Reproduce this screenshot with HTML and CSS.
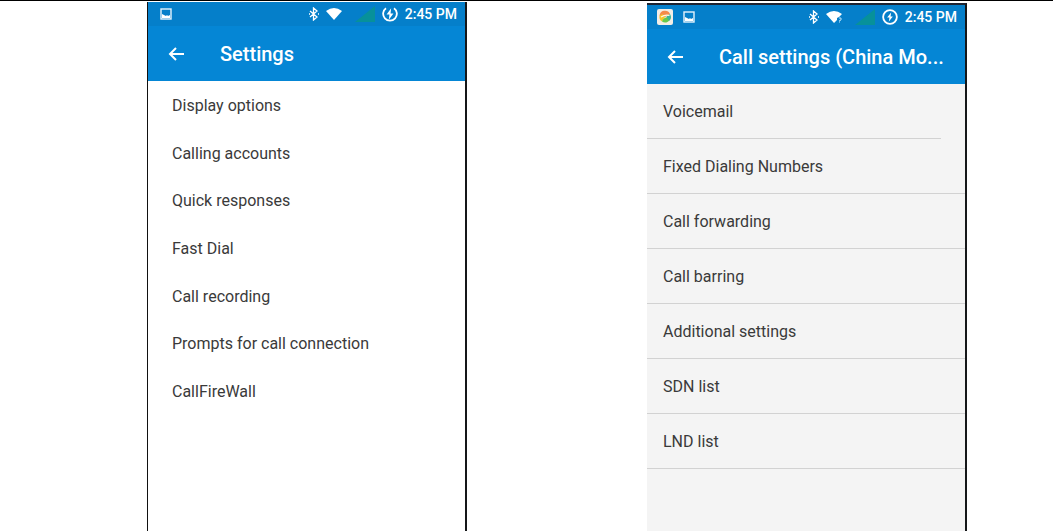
FILE: index.html
```html
<!DOCTYPE html>
<html lang="en">
<head>
  <meta charset="UTF-8">
  <title>Call settings</title>
  <link rel="stylesheet" href="styles.css">
</head>
<body>

  <main class="screens">

    <section class="phone phone-settings">
      <header class="header">
        <div class="status-bar">
          <svg class="icon-image" viewBox="0 0 12 12"><rect x="1" y="1" width="10" height="10" fill="none" stroke="#e4f3fc" stroke-width="1.4"/><path d="M2 6l2 1 2 1 1-1 1 1 2-1v3H2z" fill="#fff"/></svg>
          <span class="status-space"></span>
          <svg class="icon-bluetooth" viewBox="0 0 10 14"><path d="M1 4l7 6-3.500 3V1L8 4l-7 6M0 7h1M9 7h1" fill="none" stroke="#fff" stroke-width="1.300"/></svg>
          <svg class="icon-wifi" viewBox="0 0 16 12"><path d="M0 3Q8-3 16 3L8 12z" fill="#fff"/></svg>
          <svg class="icon-signal" viewBox="0 0 20 16"><path d="M20 0v16H0z" fill="#07919a"/></svg>
          <svg class="icon-battery" viewBox="0 0 14 14"><path d="M3.500 1.900A6 6 0 1 0 10.500 1.900" fill="none" stroke="#fff" stroke-width="1.600"/><path d="M8 2L4 7.500h2.500L6 12l4-5.500H7.500z" fill="#fff"/></svg>
          <time>2:45 PM</time>
        </div>
        <div class="toolbar">
          <button class="back" type="button" aria-label="Back">
            <svg viewBox="0 0 16 16"><path d="M16 8H2M8 2L2 8l6 6" fill="none" stroke="#fff" stroke-width="2"/></svg>
          </button>
          <h1>Settings</h1>
        </div>
      </header>
      <nav class="plain-list">
        <button type="button">Display options</button>
        <button type="button">Calling accounts</button>
        <button type="button">Quick responses</button>
        <button type="button">Fast Dial</button>
        <button type="button">Call recording</button>
        <button type="button">Prompts for call connection</button>
        <button type="button">CallFireWall</button>
      </nav>
    </section>

    <section class="phone phone-call">
      <header class="header">
        <div class="status-bar">
          <svg class="icon-app" viewBox="0 0 16 16"><rect width="16" height="16" rx="2" fill="#f4eee6"/><path d="M2.500 7A5.500 5.500 0 0 1 13 5L8 8z" fill="#f58a4b"/><path d="M2.500 7Q6 3 8 8l-3 4.500A5.500 5.500 0 0 1 2.500 7z" fill="#f5c62c"/><path d="M5 12.500Q6 8 13.500 7.500A5.500 5.500 0 0 1 5 12.500z" fill="#68c94b"/><path d="M13 5a5.500 5.500 0 0 1-1 7L9.500 7.500z" fill="#3db59b"/><path d="M4 8Q8 5.500 12.500 6.500" fill="none" stroke="#fff8e8" stroke-width="1.200"/></svg>
          <svg class="icon-image" viewBox="0 0 12 12"><rect x="1" y="1" width="10" height="10" fill="none" stroke="#e4f3fc" stroke-width="1.400"/><path d="M2 6l2 1 2 1 1-1 1 1 2-1v3H2z" fill="#fff"/></svg>
          <span class="status-space"></span>
          <svg class="icon-bluetooth" viewBox="0 0 10 14"><path d="M1 4l7 6-3.500 3V1L8 4l-7 6M0 7h1M9 7h1" fill="none" stroke="#fff" stroke-width="1.300"/></svg>
          <svg class="icon-wifi" viewBox="0 0 16 12"><path d="M0 3Q8-3 16 3L13 6l-2 1v2l-3 3z" fill="#fff"/><path d="M13 7h2v2l-2 1M13 11h1" fill="none" stroke="#b9e0f6"/></svg>
          <svg class="icon-signal" viewBox="0 0 20 16"><path d="M20 0v16H0z" fill="#07919a"/></svg>
          <svg class="icon-battery" viewBox="0 0 14 14"><circle cx="7" cy="7" r="6" fill="none" stroke="#fff" stroke-width="1.600"/><path d="M8 3L4.500 7.500h2L6 11l3.500-4.500h-2z" fill="#fff"/></svg>
          <time>2:45 PM</time>
        </div>
        <div class="toolbar">
          <button class="back" type="button" aria-label="Back">
            <svg viewBox="0 0 16 16"><path d="M16 8H2M8 2L2 8l6 6" fill="none" stroke="#fff" stroke-width="2"/></svg>
          </button>
          <h1>Call settings (China Mo...</h1>
        </div>
      </header>
      <nav class="divided-list">
        <button class="short" type="button">Voicemail</button>
        <button type="button">Fixed Dialing Numbers</button>
        <button type="button">Call forwarding</button>
        <button type="button">Call barring</button>
        <button type="button">Additional settings</button>
        <button type="button">SDN list</button>
        <button type="button">LND list</button>
      </nav>
    </section>

  </main>

</body>
</html>
```
FILE: styles.css
```css
* {
  box-sizing: border-box;
}
body {
  margin: 0;
  background-color: white;
  font-family: Roboto, "Liberation Sans", sans-serif;
}
.screens {
  display: grid;
  grid-template-columns: 1fr 1fr;
  column-gap: 180px;
  min-height: 100vh;
  padding: 0 86px 0 147px;
  border-top: 1px solid black;
}
.phone {
  border-right: 2px solid #151719;
}
.phone-settings {
  margin-top: 1px;
  border-left: 1px solid #111;
}
.phone-call {
  margin-top: 2px;
  border-top: 2px solid #1d2330;
  background-color: #f4f4f4;
}
.header {
  background-color: #0586d5;
  color: white;
}
.status-bar {
  display: flex;
  align-items: center;
  height: 24px;
  padding: 0 8px 0 10px;
  background-color: #057fca;
}
.phone-settings .status-bar {
  padding-left: 12px;
}
.status-bar svg {
  flex: none;
}
.status-space {
  flex: 1;
}
.status-bar time {
  font-size: 14px;
  font-weight: 500;
}
.icon-app {
  width: 16px;
  height: 16px;
  margin-right: 10px;
}
.icon-image {
  width: 12px;
  height: 12px;
}
.icon-bluetooth {
  width: 10px;
  height: 14px;
  margin-right: 7px;
}
.icon-wifi {
  width: 16px;
  height: 12px;
  margin-right: 13px;
}
.icon-signal {
  width: 20px;
  height: 16px;
  margin-right: 7px;
}
.icon-battery {
  width: 16px;
  height: 16px;
  margin-right: 7px;
}
.toolbar {
  display: flex;
  align-items: center;
  height: 55px;
  padding-left: 20px;
}
.back {
  width: 16px;
  height: 16px;
  margin-right: 36px;
  padding: 0;
  border: none;
  background: none;
  cursor: pointer;
}
.back svg {
  display: block;
}
h1 {
  margin: 0;
  font-size: 20px;
  font-weight: 500;
  white-space: nowrap;
}
.plain-list,
.divided-list {
  display: flex;
  flex-direction: column;
}
.plain-list {
  min-height: 334px;
  padding-top: 1px;
}
.plain-list button,
.divided-list button {
  border: none;
  background: none;
  color: #3a3a3a;
  font-family: inherit;
  font-size: 16px;
  text-align: left;
  cursor: pointer;
}
.plain-list button {
  flex: 1;
  padding: 0 24px;
}
.divided-list button {
  height: 55px;
  padding: 0 16px;
  border-bottom: 1px solid #d2d2d2;
}
.divided-list .short {
  margin-right: 24px;
}
```
